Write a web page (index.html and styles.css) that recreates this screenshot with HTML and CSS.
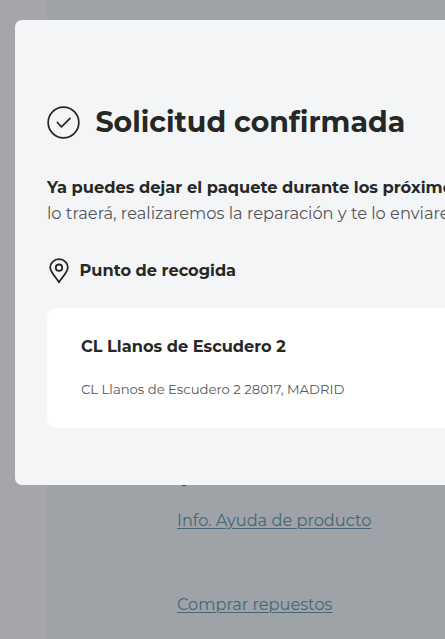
FILE: index.html
```html
<!DOCTYPE html>
<html lang="es">
<head>
    <meta charset="UTF-8">
    <meta name="viewport" content="width=device-width, initial-scale=1.0">
    <title>Solicitud confirmada</title>
    <link rel="stylesheet" href="styles.css">
</head>
<body>
    <main class="page">
        <span class="title-edge"></span>
        <a class="link link-info" href="#">Info. Ayuda de producto</a>
        <a class="link link-parts" href="#">Comprar repuestos</a>
    </main>
    <div class="modal">
        <div class="title-row">
            <svg class="icon-check" viewBox="0 0 34 34">
                <circle cx="17" cy="17" r="15.8"/>
                <path d="M10.7 17l4.2 4.5 8.8-8.8"/>
            </svg>
            <h1>Solicitud confirmada</h1>
        </div>
        <div class="message">
            <strong>Ya puedes dejar el paquete durante los próximos</strong>
            <p>lo traerá, realizaremos la reparación y te lo enviaremos</p>
        </div>
        <div class="pickup-row">
            <svg class="icon-pin" viewBox="0 0 20 26">
                <path d="M10 24.3C7.6 20 1.2 14.4 1.2 9.6a8.8 8.4 0 0 1 17.6 0C18.8 14.4 12.4 20 10 24.3z"/>
                <circle cx="10" cy="9.7" r="3.2"/>
            </svg>
            <h2>Punto de recogida</h2>
        </div>
        <div class="card">
            <h3>CL Llanos de Escudero 2</h3>
            <p>CL Llanos de Escudero 2 28017, MADRID</p>
        </div>
    </div>
</body>
</html>
```
FILE: styles.css
```css
:root {
    --text-color: #262826;
    --modal-color: #f4f5f7;
    --link-color: #416975;
}
* {
    box-sizing: border-box;
}
body {
    margin: 0;
    height: 639px;
    overflow: hidden;
    padding-left: 47px;
    background-color: #a5a6ab;
    font-family: Montserrat, Inter, "Liberation Sans", sans-serif;
    color: var(--text-color);
}
h1, h2, h3, p {
    margin: 0;
    white-space: nowrap;
}
.page {
    display: flex;
    flex-direction: column;
    align-items: flex-start;
    height: 639px;
    padding: 478px 0 0 130px;
    background-color: #9fa2a6;
}
.title-edge {
    width: 10px;
    height: 8px;
    margin-left: 2px;
    border-bottom: 2px solid #34363a;
    border-radius: 0 0 5px 5px;
}
.link {
    font-size: 16.2px;
    line-height: 24px;
    color: var(--link-color);
    text-decoration-thickness: 1px;
    text-underline-offset: 2px;
    white-space: nowrap;
}
.link-info {
    margin-top: 22px;
}
.link-parts {
    margin-top: 60px;
}
.modal {
    position: absolute;
    top: 20px;
    left: 15px;
    width: 430px;
    height: 465px;
    padding: 82px 0 0 32px;
    background-color: var(--modal-color);
    border-radius: 7px 0 0 7px;
    overflow: hidden;
}
.title-row {
    display: flex;
    align-items: center;
    height: 40px;
}
.icon-check {
    width: 33px;
    height: 33px;
    margin-right: 15.5px;
}
svg {
    flex: none;
    fill: none;
    stroke: var(--text-color);
    stroke-width: 1.8;
    stroke-linecap: round;
    stroke-linejoin: round;
}
h1 {
    font-size: 28.4px;
    line-height: 40px;
}
.message {
    margin-top: 32px;
    font-size: 16.25px;
    line-height: 26px;
}
.message strong {
    display: block;
    white-space: nowrap;
}
.message p {
    color: #555759;
}
.pickup-row {
    display: flex;
    align-items: center;
    height: 26px;
    margin-top: 32px;
    padding-left: 2px;
}
.icon-pin {
    width: 20px;
    height: 26px;
    margin-right: 10.5px;
}
h2, h3 {
    font-size: 16.2px;
    line-height: 24px;
}
h2 {
    padding-bottom: 2px;
}
.card {
    height: 120px;
    margin-top: 24px;
    padding: 26px 34px;
    background-color: #fff;
    border-radius: 10px 0 0 10px;
}
.card p {
    margin-top: 21px;
    font-size: 13.2px;
    line-height: 20px;
    color: #555759;
}
```
